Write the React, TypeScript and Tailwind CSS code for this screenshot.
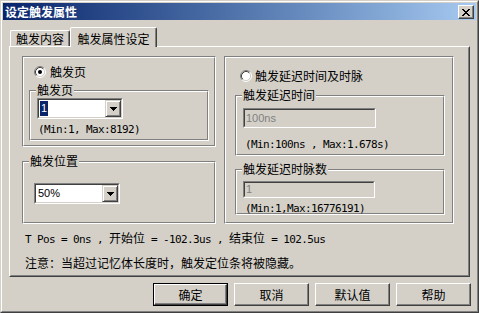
const CJK = /[\u3000-\u303f\u4e00-\u9fff\uff00-\uffef]/;

// splits text into CJK runs (12px) and ascii runs (6px mono, like SimSun)
function Mixed({ text }: { text: string }) {
  const parts = text.split(/([\u3000-\u303f\u4e00-\u9fff\uff00-\uffef]+)/);
  return (
    <>
      {parts.map((p, i) =>
        p === "" ? null : CJK.test(p) ? (
          <span key={i} className="font-['Noto_Sans_CJK_SC',sans-serif] text-[12px]">
            {p}
          </span>
        ) : (
          <span key={i} className="font-['DejaVu_Sans_Mono',monospace] text-[11px] tracking-[-0.62px] whitespace-pre">
            {p}
          </span>
        )
      )}
    </>
  );
}

function Group({ legend, className, children }: { legend?: string; className?: string; children?: React.ReactNode }) {
  return (
    <div className={`relative border border-t-[#808080] border-l-[#808080] border-r-white border-b-white ${className ?? ""}`}>
      <div className="h-full border border-t-white border-l-white border-r-[#808080] border-b-[#808080]">{children}</div>
      {legend && (
        <span className="absolute left-[6px] -top-[8px] bg-[#d4d0c8] px-[1px] text-[12px] leading-[14px]">{legend}</span>
      )}
    </div>
  );
}

function Radio({ checked }: { checked?: boolean }) {
  return (
    <svg width="12" height="12" viewBox="0 0 12 12" className="shrink-0">
      <circle cx="6" cy="6" r="4.5" fill="white" />
      <path d="M2.11 9.89A5.5 5.5 0 0 1 9.89 2.11" stroke="#808080" fill="none" />
      <path d="M9.89 2.11A5.5 5.5 0 0 1 2.11 9.89" stroke="white" fill="none" />
      <path d="M2.82 9.18A4.5 4.5 0 0 1 9.18 2.82" stroke="#404040" fill="none" />
      <path d="M9.18 2.82A4.5 4.5 0 0 1 2.82 9.18" stroke="#d4d0c8" fill="none" />
      {checked && <circle cx="6" cy="6" r="2" fill="black" />}
    </svg>
  );
}

function Combo({ value, selected }: { value: string; selected?: boolean }) {
  return (
    <div className="w-[86px] h-[21px] border border-t-[#808080] border-l-[#808080] border-r-white border-b-white">
      <div className="h-full flex bg-white border border-t-[#404040] border-l-[#404040] border-r-[#d4d0c8] border-b-[#d4d0c8]">
        <div className="flex-1 flex items-center pl-[1px] font-['Liberation_Sans',sans-serif] text-[11px]">
          {selected ? (
            <span className="bg-[#0a246a] text-white h-[15px] leading-[15px] px-[1px]">{value}</span>
          ) : (
            <span className="pl-[1px]">{value}</span>
          )}
        </div>
        <div className="w-[16px] h-full flex items-center justify-center bg-[#d4d0c8] border border-t-[#d4d0c8] border-l-[#d4d0c8] border-r-[#404040] border-b-[#404040] shadow-[inset_1px_1px_0_white,inset_-1px_-1px_0_#808080]">
          <svg width="7" height="4" shapeRendering="crispEdges">
            <path d="M0 0h7v1H0zM1 1h5v1H1zM2 2h3v1H2zM3 3h1v1H3z" fill="black" />
          </svg>
        </div>
      </div>
    </div>
  );
}

function Edit({ value, className }: { value: string; className: string }) {
  return (
    <div className={`border border-t-[#808080] border-l-[#808080] border-r-white border-b-white ${className}`}>
      <div className="h-full flex items-center pl-[1px] border border-t-[#404040] border-l-[#404040] border-r-[#d4d0c8] border-b-[#d4d0c8] font-['Liberation_Sans',sans-serif] text-[11px] text-[#808080]">
        {value}
      </div>
    </div>
  );
}

function Btn({ label, primary }: { label: string; primary?: boolean }) {
  const face =
    "flex items-center justify-center border border-t-white border-l-white border-r-[#404040] border-b-[#404040] shadow-[inset_-1px_-1px_0_#808080] text-[12px]";
  if (primary)
    return (
      <div className="w-[75px] h-[23px] border border-black">
        <div className={`h-full ${face}`}>{label}</div>
      </div>
    );
  return <div className={`w-[75px] h-[23px] ${face}`}>{label}</div>;
}

export default function App() {
  return (
    <div className="w-[479px] h-[313px] bg-[#d4d0c8] border border-t-[#d4d0c8] border-l-[#d4d0c8] border-r-[#404040] border-b-[#404040] font-['Noto_Sans_CJK_SC',sans-serif] text-[12px] text-black select-none">
      <div className="h-full p-[1px] border border-t-white border-l-white border-r-[#808080] border-b-[#808080]">
        {/* Title bar */}
        <div className="h-[17px] flex justify-between bg-linear-to-r from-[#0a246a] to-[#a6caf0] pl-[2px] pr-[2px]">
          <span className="text-white font-bold leading-[17px]">设定触发属性</span>
          <div className="mt-[2px] w-[16px] h-[14px] flex items-center justify-center bg-[#d4d0c8] border border-t-white border-l-white border-r-[#404040] border-b-[#404040] shadow-[inset_-1px_-1px_0_#808080]">
            <svg width="8" height="7" shapeRendering="crispEdges">
              <path
                d="M0 0h2v1H0zM6 0h2v1H6zM1 1h2v1H1zM5 1h2v1H5zM2 2h4v1H2zM3 3h2v1H3zM2 4h4v1H2zM1 5h2v1H1zM5 5h2v1H5zM0 6h2v1H0zM6 6h2v1H6z"
                fill="black"
              />
            </svg>
          </div>
        </div>

        {/* Tabs */}
        <div className="ml-[6px] mt-[7px] w-[461px]">
          <div className="relative z-10 flex items-end h-[20px] -mb-[1px]">
            <div className="ml-[1px] mb-[1px] w-[60px] h-[16px] flex items-center justify-center rounded-t-[2px] border-t border-l border-r border-t-white border-l-white border-r-[#404040] shadow-[inset_-1px_0_0_#808080] leading-[14px]">
              触发内容
            </div>
            <div className="w-[87px] h-[20px] pt-[2px] flex items-center justify-center bg-[#d4d0c8] rounded-t-[2px] border-t border-l border-r border-t-white border-l-white border-r-[#404040] shadow-[inset_-1px_0_0_#808080] leading-[14px]">
              触发属性设定
            </div>
          </div>

          {/* Tab page */}
          <div className="h-[231px] border border-t-white border-l-white border-r-[#404040] border-b-[#404040]">
            <div className="h-full pl-[11px] pt-[8px] border border-t-[#d4d0c8] border-l-[#d4d0c8] border-r-[#808080] border-b-[#808080]">
              <div className="flex gap-[8px]">
                {/* Left column */}
                <div className="w-[194px] flex flex-col">
                  <Group className="h-[91px]">
                    <div className="pl-[10px] pt-[8px] flex items-center gap-[4px]">
                      <Radio checked />
                      <span className="leading-[12px]">触发页</span>
                    </div>
                    <Group legend="触发页" className="ml-[5px] mt-[12px] w-[180px] h-[51px]">
                      <div className="pl-[6px] pt-[6px]">
                        <Combo value="1" selected />
                        <div className="mt-[3px] ml-[1px] leading-[12px]">
                          <Mixed text="(Min:1, Max:8192)" />
                        </div>
                      </div>
                    </Group>
                  </Group>
                  <Group legend="触发位置" className="mt-[14px] h-[63px]">
                    <div className="pl-[10px] pt-[20px]">
                      <Combo value="50%" />
                    </div>
                  </Group>
                </div>

                {/* Right column */}
                <Group className="w-[230px] h-[168px]">
                  <div className="pl-[14px] pt-[12px] flex items-center gap-[3px]">
                    <Radio />
                    <span className="leading-[12px]">触发延迟时间及时脉</span>
                  </div>
                  <Group legend="触发延迟时间" className="ml-[9px] mt-[13px] w-[210px] h-[61px]">
                    <div className="pl-[6px] pt-[11px]">
                      <Edit value="100ns" className="w-[133px] h-[20px]" />
                      <div className="mt-[9px] ml-[2px] leading-[12px]">
                        <Mixed text="(Min:100ns , Max:1.678s)" />
                      </div>
                    </div>
                  </Group>
                  <Group legend="触发延迟时脉数" className="ml-[9px] mt-[13px] w-[210px] h-[46px]">
                    <div className="pl-[6px] pt-[10px]">
                      <Edit value="1" className="w-[132px] h-[17px]" />
                      <div className="mt-[3px] ml-[2px] leading-[12px]">
                        <Mixed text="(Min:1,Max:16776191)" />
                      </div>
                    </div>
                  </Group>
                </Group>
              </div>

              <div className="ml-[3px] mt-[5px] leading-[18px]">
                <Mixed text="T Pos = 0ns , 开始位 = -102.3us , 结束位 = 102.5us" />
              </div>
              <div className="ml-[3px] mt-[5px] leading-[18px]">
                <Mixed text="注意：当超过记忆体长度时，触发定位条将被隐藏。" />
              </div>
            </div>
          </div>
        </div>

        {/* Buttons */}
        <div className="mt-[6px] pr-[5px] flex justify-end gap-[6px]">
          <Btn label="确定" primary />
          <Btn label="取消" />
          <Btn label="默认值" />
          <Btn label="帮助" />
        </div>
      </div>
    </div>
  );
}
